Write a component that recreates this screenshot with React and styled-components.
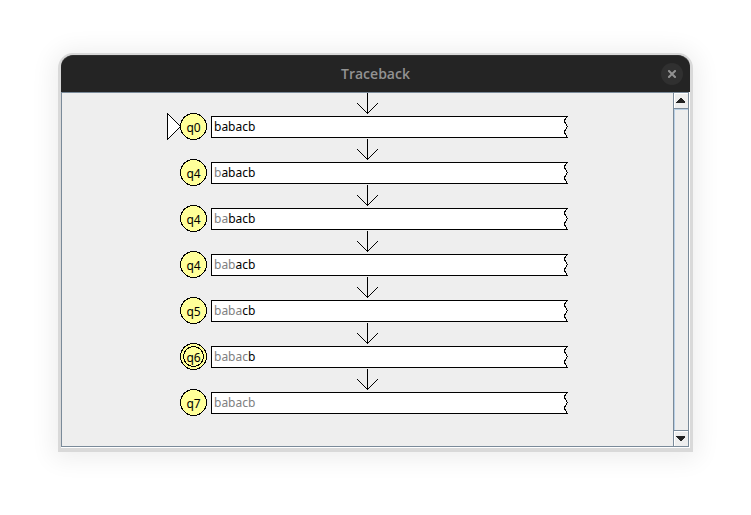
import React from "react";
import styled, { createGlobalStyle } from "styled-components";

const GlobalStyle = createGlobalStyle`
  * { box-sizing: border-box; }
  body { margin: 0; background: #fff; }
`;

const Desktop = styled.main`
  display: flex;
  min-height: 100vh;
  padding: 55px 61px 67px;
`;

const Window = styled.section`
  flex: 1;
  min-width: 0;
  display: flex;
  flex-direction: column;
  border-radius: 12px 12px 0 0;
  background: #fff;
  box-shadow: 0 1px 0 3px #d9d9d9, 0 3px 24px 8px rgba(0, 0, 0, 0.07);
`;

const TitleBar = styled.header`
  display: grid;
  grid-template-columns: 1fr auto 1fr;
  align-items: center;
  height: 37px;
  padding: 0 7px 1px;
  border-radius: 12px 12px 0 0;
  background: #242424;
  border-top: 1px solid #303030;
`;

const Title = styled.h1`
  grid-column: 2;
  margin: 0;
  font: 600 14px/20px "Open Sans", "Noto Sans", sans-serif;
  color: #929292;
`;

const CloseButton = styled.button`
  justify-self: end;
  display: grid;
  place-items: center;
  width: 22px;
  height: 22px;
  padding: 0;
  border: 0;
  border-radius: 50%;
  background: #303030;
  color: #929292;
`;

const Viewport = styled.div`
  flex: 1;
  display: flex;
  border: 1px solid #7a8a99;
  margin: 0 1px 1px 0;
  background: #eee;
`;

const Trace = styled.ol`
  flex: 1;
  min-width: 0;
  margin: 0;
  padding: 0 105px;
  list-style: none;
`;

const Step = styled.li`
  display: flex;
  flex-direction: column;
  align-items: center;
`;

const Drawing = styled.svg`
  display: block;
  flex: none;
  overflow: visible;
  fill: none;
  stroke: #000;
  shape-rendering: crispEdges;
`;

const Configuration = styled.div`
  align-self: stretch;
  display: flex;
  align-items: flex-start;
  height: 26px;
`;

const StateLabel = styled.text`
  font: 12px "Noto Sans", sans-serif;
  fill: #000;
  stroke: none;
  text-anchor: middle;
`;

const Tape = styled.div`
  flex: 1;
  display: flex;
  justify-content: space-between;
  height: 22px;
  margin: 3px 0 0 4px;
`;

const TapeText = styled.div`
  flex: 1;
  padding-left: 2px;
  border: 1px solid #000;
  border-right: 0;
  background: #fff;
  font: 12px/20px "Noto Sans", sans-serif;
  color: #000;
`;

const Consumed = styled.span`
  color: #808080;
`;

const ScrollBar = styled.div`
  display: flex;
  flex-direction: column;
  width: 15px;
  border-left: 1px solid #7a8a99;
`;

const ScrollButton = styled.button`
  display: grid;
  justify-content: center;
  align-content: start;
  height: 15px;
  padding: 4px 2px 0 0;
  border: 0;
  border-top: 1px solid #fff;
  border-left: 1px solid #fff;
  background: #eee;
`;

const Thumb = styled.div`
  flex: 1;
  border: 1px solid #7a8a99;
  border-width: 1px 0;
  box-shadow: inset 1px 1px #b8cfe5;
`;

const steps = [
  { state: "q0", read: 0, initial: true },
  { state: "q4", read: 1 },
  { state: "q4", read: 2 },
  { state: "q4", read: 3 },
  { state: "q5", read: 4 },
  { state: "q6", read: 5, final: true },
  { state: "q7", read: 6 },
];
const input = "babacb";

function Arrow() {
  return (
    <Drawing width="21" height="20" aria-hidden="true">
      <path d="M10.5 0V20M0.5 10.5L10.5 20.5L20.5 10.5" />
    </Drawing>
  );
}

function StateNode({ state, initial, final }) {
  return (
    <Drawing width="40" height="26" role="img" aria-label={state}>
      {initial && <path d="M0.5 0.5V26.5L13.5 13.5Z" fill="#fff" />}
      <circle cx="26.5" cy="13.5" r="13" fill="#ffff99" />
      {final && <circle cx="26.5" cy="13.5" r="10" />}
      <StateLabel x="26.5" y="19">{state}</StateLabel>
    </Drawing>
  );
}

function TornEdge() {
  return (
    <Drawing width="4" height="22" aria-hidden="true">
      <path
        d="M0 0H4L1.5 2.5L0.5 5.5L1.5 7.5L3.5 10.5L1.5 13.5L0.5 16.5L1.5 18.5L4 22H0Z"
        fill="#fff"
        stroke="none"
      />
      <path d="M0 0.5H3.5L1.5 2.5L0.5 4.5V5.5L1.5 7.5L3.5 10.5L1.5 13.5L0.5 15.5V16.5L1.5 18.5L3.5 21.5H0" />
    </Drawing>
  );
}

function Caret({ down }) {
  return (
    <svg width="9" height="5" shapeRendering="crispEdges" aria-hidden="true">
      <path d={down ? "M0 0H9V1L5 5H4L0 1Z" : "M4 0H5L9 4V5H0V4Z"} fill="#222" />
    </svg>
  );
}

export default function App() {
  return (
    <>
      <GlobalStyle />
      <Desktop>
        <Window>
          <TitleBar>
            <Title>Traceback</Title>
            <CloseButton aria-label="Close">
              <svg width="8" height="8" aria-hidden="true">
                <path d="M1 1L7 7M7 1L1 7" stroke="currentColor" strokeWidth="2" strokeLinecap="square" />
              </svg>
            </CloseButton>
          </TitleBar>
          <Viewport>
            <Trace>
              {steps.map((step, index) => (
                <Step key={index}>
                  <Arrow />
                  <Configuration>
                    <StateNode {...step} />
                    <Tape>
                      <TapeText>
                        <Consumed>{input.slice(0, step.read)}</Consumed>
                        {input.slice(step.read)}
                      </TapeText>
                      <TornEdge />
                    </Tape>
                  </Configuration>
                </Step>
              ))}
            </Trace>
            <ScrollBar>
              <ScrollButton aria-label="Scroll up"><Caret /></ScrollButton>
              <Thumb />
              <ScrollButton aria-label="Scroll down"><Caret down /></ScrollButton>
            </ScrollBar>
          </Viewport>
        </Window>
      </Desktop>
    </>
  );
}
